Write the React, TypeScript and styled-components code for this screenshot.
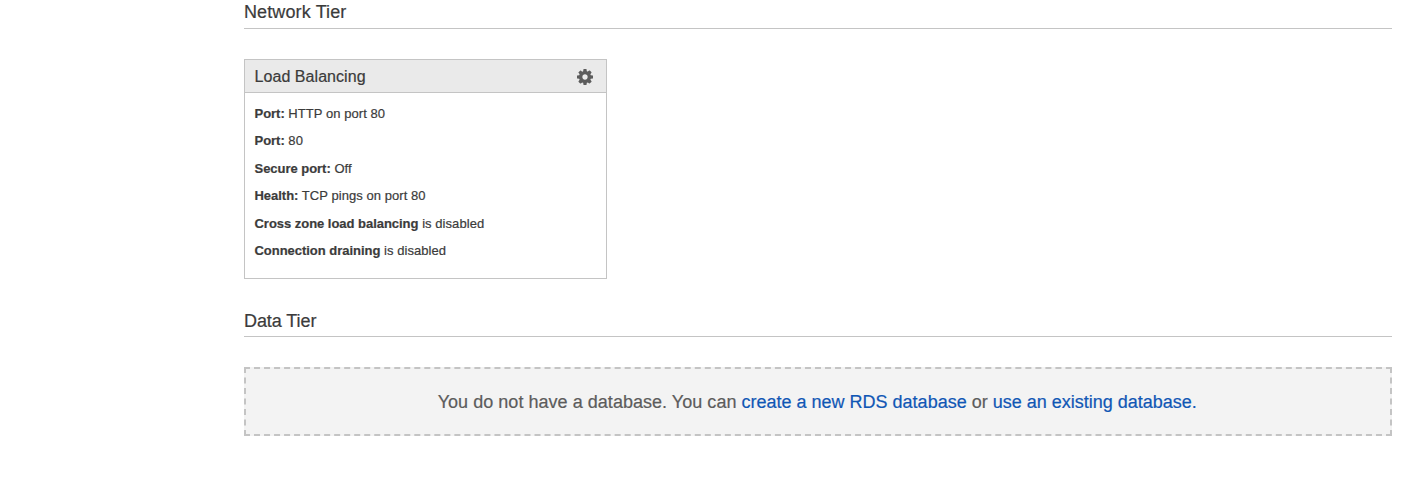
import React from "react";
import styled, { createGlobalStyle } from "styled-components";

const GlobalStyle = createGlobalStyle`
  * { box-sizing: border-box; }
  body {
    margin: 0;
    background: #fff;
    color: #3b3b3b;
    font-family: "Liberation Sans", Arial, sans-serif;
    -webkit-text-stroke: 0.2px;
  }
`;

const Page = styled.main`
  padding: 0 14px 0 244px;
`;

const Tier = styled.section<{ $height?: number }>`
  display: flex;
  flex-direction: column;
  align-items: stretch;
  height: ${({ $height }) => ($height ? `${$height}px` : "auto")};
`;

const TierTitle = styled.h2<{ $gap: number; $spacing: number }>`
  margin: 0 0 30px;
  padding-top: 2px;
  padding-bottom: ${({ $gap }) => $gap}px;
  border-bottom: 1px solid #c4c4c4;
  font-size: 18px;
  font-weight: 400;
  line-height: 20px;
  letter-spacing: ${({ $spacing }) => $spacing}px;
`;

const Card = styled.article`
  width: 363px;
  height: 220px;
  border: 1px solid #c4c4c4;
`;

const CardHeader = styled.header`
  display: flex;
  align-items: center;
  justify-content: space-between;
  height: 33px;
  padding: 0 13.5px 0 9.5px;
  background: #eaeaea;
  border-bottom: 1px solid #c4c4c4;
`;

const CardTitle = styled.h3`
  margin: 0;
  padding-top: 2px;
  font-size: 16px;
  font-weight: 400;
  line-height: 20px;
  letter-spacing: 0.06px;
`;

const GearButton = styled.button`
  display: flex;
  padding: 2px 0 0;
  border: 0;
  background: none;
  color: #5c5c5c;
`;

const Settings = styled.ul`
  margin: 0;
  padding: 6.6px 9.5px;
  list-style: none;
`;

const Setting = styled.li`
  height: 27.5px;
  font-size: 13px;
  line-height: 27.5px;
  letter-spacing: 0.06px;
  white-space: nowrap;
`;

const Label = styled.strong`
  font-weight: 700;
  letter-spacing: -0.03px;
`;

const Notice = styled.p`
  display: flex;
  align-items: center;
  justify-content: center;
  height: 69px;
  margin: 0;
  border: 2px dashed #c4c4c4;
  background: #f3f3f3;
  color: #5c5c5c;
  font-size: 18px;
  line-height: 20px;
  white-space: pre;
`;

const NoticeText = styled.span`
  padding-right: 1.5px;
`;

const Lead = styled.span`
  letter-spacing: 0.035px;
`;

const Link = styled.a`
  color: #1057b5;
  text-decoration: none;
`;

const settings = [
  { label: "Port:", value: "HTTP on port 80" },
  { label: "Port:", value: "80" },
  { label: "Secure port:", value: "Off" },
  { label: "Health:", value: "TCP pings on port 80" },
  { label: "Cross zone load balancing", value: "is disabled" },
  { label: "Connection draining", value: "is disabled" },
];

const GearIcon = () => (
  <svg width="16" height="16" viewBox="0 128 1536 1536" fill="currentColor" fillRule="evenodd" aria-hidden="true">
    <path d="M1024 896q0 106-75 181t-181 75-181-75-75-181 75-181 181-75 181 75 75 181zm512-109v222q0 12-8 23t-20 13l-185 28q-19 54-39 91 35 50 107 138 10 12 10 25t-9 23q-27 37-99 108t-94 71q-12 0-26-9l-138-108q-44 23-91 38-16 136-29 186-7 28-36 28h-222q-14 0-24.5-8.5t-11.5-21.5l-28-184q-49-16-90-37l-141 107q-10 9-25 9-14 0-25-11-126-114-165-168-7-10-7-23 0-12 8-23 15-21 51-66.5t54-70.5q-27-50-41-99l-183-27q-13-2-21-12.5t-8-23.5v-222q0-12 8-23t19-13l186-28q14-46 39-92-40-57-107-138-10-12-10-24 0-10 9-23 26-36 98.5-107.5t94.5-71.5q13 0 26 10l138 107q44-23 91-38 16-136 29-186 7-28 36-28h222q14 0 24.5 8.5t11.5 21.5l28 184q49 16 90 37l142-107q9-9 24-9 13 0 25 10 129 119 165 170 7 8 7 22 0 12-8 23-15 21-51 66.5t-54 70.5q26 50 41 98l183 28q13 2 21 12.5t8 23.5z" />
  </svg>
);

export default function App() {
  return (
    <>
      <GlobalStyle />
      <Page>
        <Tier $height={309}>
          <TierTitle $gap={6} $spacing={0.12}>Network Tier</TierTitle>
          <Card>
            <CardHeader>
              <CardTitle>Load Balancing</CardTitle>
              <GearButton aria-label="Load balancing settings">
                <GearIcon />
              </GearButton>
            </CardHeader>
            <Settings>
              {settings.map(({ label, value }, i) => (
                <Setting key={i}>
                  <Label>{label}</Label> {value}
                </Setting>
              ))}
            </Settings>
          </Card>
        </Tier>
        <Tier>
          <TierTitle $gap={5} $spacing={-0.08}>Data Tier</TierTitle>
          <Notice>
            <NoticeText>
              <Lead>You do not have a database. You can </Lead>
              <Link>create a new RDS database</Link> or <Link>use an existing database.</Link>
            </NoticeText>
          </Notice>
        </Tier>
      </Page>
    </>
  );
}
